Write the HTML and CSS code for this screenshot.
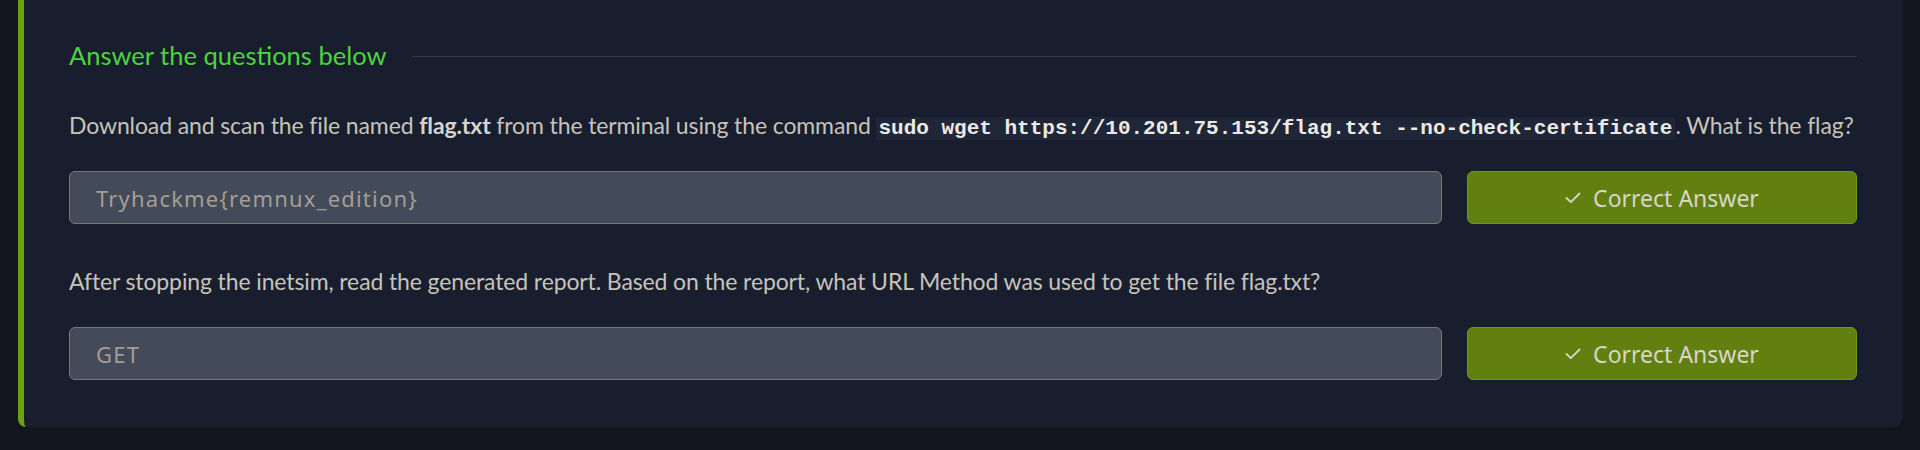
FILE: index.html
```html
<!DOCTYPE html>
<html lang="en">
<head>
<meta charset="utf-8">
<title>Answer the questions below</title>
<link rel="stylesheet" href="styles.css">
</head>
<body>
<section class="task-card">
  <div class="qa-header">
    <h3 class="qa-title">Answer the questions below</h3>
    <span class="qa-rule"></span>
  </div>

  <div class="question first">
    <p class="q-text">Download and scan the file named <strong>flag.txt</strong> from the terminal using the command <code class="cmd">sudo wget https://10.201.75.153/flag.txt --no-check-certificate</code>. What is the flag?</p>
    <div class="answer-row">
      <input class="answer-input" type="text" value="Tryhackme{remnux_edition}" readonly>
      <button class="answer-btn" type="button">
        <svg class="check" width="16" height="12" viewBox="0 0 16 12" aria-hidden="true"><polyline points="1.5,6 5.8,10.2 14.5,1.5" fill="none" stroke="currentColor" stroke-width="1.8" stroke-linecap="round" stroke-linejoin="round"/></svg>
        <span>Correct Answer</span>
      </button>
    </div>
  </div>

  <div class="question">
    <p class="q-text">After stopping the inetsim, read the generated report. Based on the report, what URL Method was used to get the file flag.txt?</p>
    <div class="answer-row">
      <input class="answer-input" type="text" value="GET" readonly>
      <button class="answer-btn" type="button">
        <svg class="check" width="16" height="12" viewBox="0 0 16 12" aria-hidden="true"><polyline points="1.5,6 5.8,10.2 14.5,1.5" fill="none" stroke="currentColor" stroke-width="1.8" stroke-linecap="round" stroke-linejoin="round"/></svg>
        <span>Correct Answer</span>
      </button>
    </div>
  </div>
</section>
</body>
</html>
```

FILE: styles.css
```css
* { box-sizing: border-box; }

html, body {
  margin: 0;
  padding: 0;
  background: #13161f;
  height: 100%;
}

body {
  font-family: Lato, "Noto Sans", sans-serif;
  overflow: hidden;
}

.task-card {
  margin: 0 18px;
  background: #181e2e;
  border-left: 6px solid #6aa312;
  border-radius: 0 0 8px 8px;
  padding: 36px 45px 47px 45px;
}

.qa-header {
  display: flex;
  align-items: center;
  gap: 26px;
}

.qa-title {
  margin: 0;
  font-family: Lato, "Noto Sans", sans-serif;
  font-weight: 400;
  font-size: 25.5px;
  line-height: 38px;
  color: #4cd43d;
  white-space: nowrap;
}

.qa-rule {
  flex: 1;
  height: 1px;
  margin-top: 3px;
  background: #353b4b;
}

.question { margin-top: 41px; }
.question.first { margin-top: 35px; }

.q-text {
  margin: 0 0 30px 0;
  font-size: 23px;
  line-height: 32px;
  letter-spacing: -0.12px;
  color: #c6c3bb;
}

.q-text strong {
  font-weight: 700;
  color: #d6d3cc;
}

.cmd {
  font-family: "Liberation Mono", monospace;
  font-weight: 700;
  font-size: 21px;
  line-height: 1;
  letter-spacing: 0;
  color: #eceae6;
  background: #1f2637;
  padding: 0 3px 0 2px;
}

.answer-row {
  display: grid;
  grid-template-columns: 1fr 390px;
  gap: 25px;
}

.answer-input {
  height: 53px;
  margin: 0;
  padding: 0 20px 0 26px;
  background: #434a59;
  border: 1px solid #7a7770;
  border-radius: 6px;
  font-family: "Noto Sans", sans-serif;
  font-size: 22px;
  letter-spacing: 1.2px;
  color: #a39e93;
  outline: none;
}

.answer-btn {
  height: 53px;
  margin: 0;
  display: flex;
  align-items: center;
  justify-content: center;
  gap: 12px;
  background: #62800f;
  border: 1px solid #6c9a12;
  border-radius: 6px;
  font-family: "Noto Sans", sans-serif;
  font-size: 23px;
  color: #d8d5cb;
  cursor: pointer;
  padding: 0;
}

.check {
  display: block;
  margin-top: 1px;
}
```
